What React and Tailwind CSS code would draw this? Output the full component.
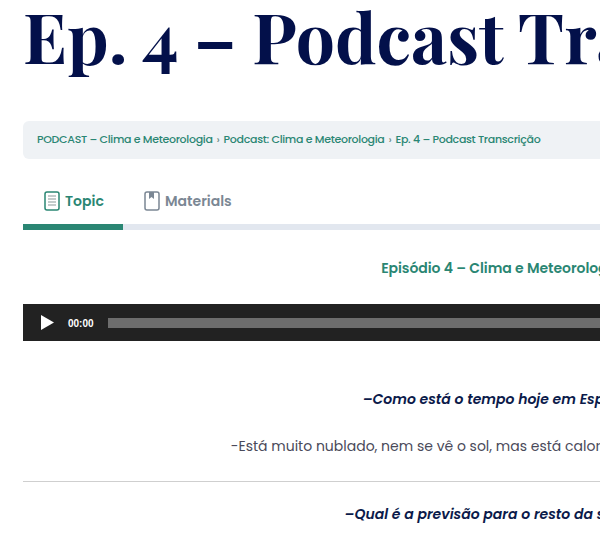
import React from "react";

const sans = "font-['Poppins','Inter','Noto_Sans',sans-serif]";

function TopicIcon() {
  return (
    <svg width="16" height="20" viewBox="0 0 16 20" fill="none" className="shrink-0">
      <rect x="1" y="1" width="14" height="18" rx="2" stroke="#2a8673" strokeWidth="1.5" />
      <path d="M4 5h8M4 8h8M4 11h8M4 14h8" stroke="#8a9a9a" strokeWidth="1.2" />
    </svg>
  );
}

function MaterialsIcon() {
  return (
    <svg width="16" height="20" viewBox="0 0 16 20" fill="none" className="shrink-0">
      <rect x="1" y="1" width="14" height="18" rx="2" stroke="#7b8794" strokeWidth="1.5" />
      <path d="M5 1h5v7L7.5 6 5 8z" fill="#7b8794" />
    </svg>
  );
}

function Sep() {
  return <span className="mx-[4px] text-[#6f8f88]">›</span>;
}

export default function App() {
  return (
    <div className="w-[600px] h-[548px] overflow-hidden bg-white">
      <div className={`w-[1000px] pl-[23px] pr-[21px] ${sans}`}>
        <h1 className="h-[121px] text-[#03104a] text-[69.5px] leading-[70px] font-bold whitespace-nowrap font-['Playfair_Display','Liberation_Serif',serif]">
          Ep. 4 – Podcast Transcrição
        </h1>
        <div className="h-[38px] rounded-md bg-[#eff2f5] flex items-center pl-[14px] pb-[1px] text-[11px] font-medium tracking-[-0.3px] text-[#2a8673] whitespace-nowrap">
          <span>PODCAST – Clima e Meteorologia</span>
          <Sep />
          <span>Podcast: Clima e Meteorologia</span>
          <Sep />
          <span>Ep. 4 – Podcast Transcrição</span>
        </div>
        <div className="mt-[21px] h-[50px] relative flex border-b-[6px] border-[#e2e7ef]">
          <div className="w-[100px] flex items-center gap-[5px] pl-[21px] pb-[2px] text-[14px] font-semibold text-[#2a8673]">
            <TopicIcon />
            <span>Topic</span>
          </div>
          <div className="flex items-center gap-[5px] pl-[21px] pb-[2px] text-[14px] font-semibold text-[#7b8794]">
            <MaterialsIcon />
            <span>Materials</span>
          </div>
          <div className="absolute left-0 bottom-[-6px] w-[100px] h-[6px] bg-[#2a8673]" />
        </div>
        <p className="mt-[28px] text-center text-[14px] font-semibold leading-[20px] tracking-[-0.05px] text-[#2a8673]">
          Episódio 4 – Clima e Meteorologia
        </p>
        <div className="mt-[26px] h-[37px] bg-[#222222] flex items-center pl-[18px]">
          <svg width="13" height="15" viewBox="0 0 13 15" className="shrink-0">
            <path d="M0 0L13 7.5L0 15z" fill="#ffffff" />
          </svg>
          <span className="ml-[14px] mt-[2px] text-[10px] font-bold text-white font-['Liberation_Sans',sans-serif]">00:00</span>
          <div className="ml-[14px] h-[10px] flex-1 bg-[#6d6d6d]" />
        </div>
        <p className="mt-[47px] pl-[10px] text-center text-[14px] italic font-semibold leading-[22px] text-[#0b1a4a]">
          –Como está o tempo hoje em Espanha?
        </p>
        <p className="mt-[25px] pl-[2px] text-center text-[14px] leading-[22px] text-[#4a4a5a]">
          -Está muito nublado, nem se vê o sol, mas está calor. Vai chover à tarde hoje.
        </p>
        <hr className="mt-[24px] border-t border-[#cfcfcf]" />
        <p className="mt-[21px] pl-[6px] text-center text-[14px] italic font-semibold leading-[22px] text-[#0b1a4a]">
          –Qual é a previsão para o resto da semana?
        </p>
      </div>
    </div>
  );
}
